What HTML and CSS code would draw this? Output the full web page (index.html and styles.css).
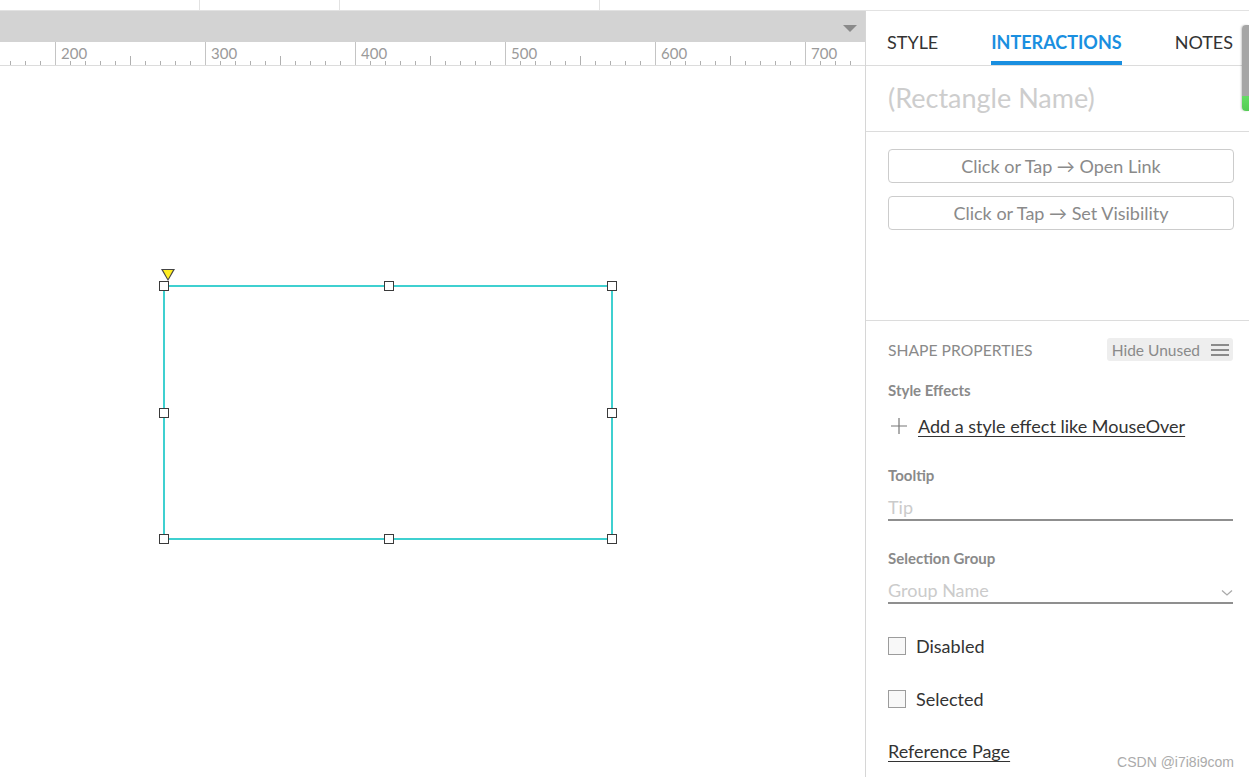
FILE: index.html
```html
<!DOCTYPE html>
<html lang="en">
<head>
    <meta charset="UTF-8">
    <title>Axure - Interactions</title>
    <link rel="stylesheet" href="styles.css">
</head>
<body>
<div class="top_strip">
    <span class="strip_cell" style="width:200px"></span>
    <span class="strip_cell" style="width:140px"></span>
    <span class="strip_cell" style="width:260px"></span>
</div>
<div class="main">
    <div class="work">
        <div class="work_bar">
            <span class="bar_arrow"></span>
        </div>
        <div class="ruler">
            <div class="ruler_start"></div>
            <div class="ruler_cell">200</div>
            <div class="ruler_cell">300</div>
            <div class="ruler_cell">400</div>
            <div class="ruler_cell">500</div>
            <div class="ruler_cell">600</div>
            <div class="ruler_cell ruler_last">700</div>
        </div>
        <div class="canvas">
            <div class="shape">
                <span class="shape_marker"></span>
                <span class="handle h_tl"></span>
                <span class="handle h_tc"></span>
                <span class="handle h_tr"></span>
                <span class="handle h_ml"></span>
                <span class="handle h_mr"></span>
                <span class="handle h_bl"></span>
                <span class="handle h_bc"></span>
                <span class="handle h_br"></span>
            </div>
        </div>
    </div>
    <div class="panel">
        <div class="tabs">
            <a href="###" class="tab">STYLE</a>
            <a href="###" class="tab active">INTERACTIONS</a>
            <a href="###" class="tab">NOTES</a>
        </div>
        <div class="name_box">(Rectangle Name)</div>
        <div class="actions">
            <a href="###" class="action_btn">Click or Tap → Open Link</a>
            <a href="###" class="action_btn">Click or Tap → Set Visibility</a>
        </div>
        <div class="props">
            <div class="props_head">
                <span class="props_title">SHAPE PROPERTIES</span>
                <span class="hide_btn">Hide Unused
                    <svg width="18" height="14" viewBox="0 0 18 14">
                        <rect x="0" y="1" width="18" height="2" fill="#8c8c8c"/>
                        <rect x="0" y="6" width="18" height="2" fill="#8c8c8c"/>
                        <rect x="0" y="11" width="18" height="2" fill="#8c8c8c"/>
                    </svg>
                </span>
            </div>
            <div class="label label_first">Style Effects</div>
            <div class="effect_row">
                <svg width="18" height="18" viewBox="0 0 18 18">
                    <path d="M9 1 V17 M1 9 H17" stroke="#777" stroke-width="1.2" fill="none"/>
                </svg>
                <a href="###" class="link">Add a style effect like MouseOver</a>
            </div>
            <div class="label">Tooltip</div>
            <div class="field">Tip</div>
            <div class="label">Selection Group</div>
            <div class="field field_select">Group Name
                <svg width="12" height="8" viewBox="0 0 12 8">
                    <path d="M1 1.5 L6 6 L11 1.5" stroke="#aaa" stroke-width="1.3" fill="none"/>
                </svg>
            </div>
            <label class="check_row check_first"><span class="check_box"></span>Disabled</label>
            <label class="check_row"><span class="check_box"></span>Selected</label>
            <a href="###" class="link ref_link">Reference Page</a>
        </div>
        <span class="scroll_thumb"></span>
        <span class="watermark">CSDN @i7i8i9com</span>
    </div>
</div>
</body>
</html>
```

FILE: styles.css
```css
*{
    padding:0;
    margin:0;
    box-sizing: border-box;
}
a {
    text-decoration: none;
    color: inherit;
}
body {
    width: 1249px;
    height: 777px;
    overflow: hidden;
    background: #fff;
    font-family: Lato, "Open Sans", sans-serif;
    color: #333;
}
.top_strip {
    display: flex;
    height: 11px;
    border-bottom: 1px solid #e2e2e2;
}
.strip_cell {
    height: 10px;
    border-right: 1px solid #e2e2e2;
}
.main {
    display: flex;
    height: 766px;
}
.work {
    width: 865px;
    display: flex;
    flex-direction: column;
    overflow: hidden;
}
.work_bar {
    height: 31px;
    background: #d3d3d3;
    display: flex;
    justify-content: flex-end;
    align-items: center;
    padding: 4px 8px 0 0;
}
.bar_arrow {
    width: 0;
    height: 0;
    border-left: 7px solid transparent;
    border-right: 7px solid transparent;
    border-top: 7px solid #8a8a8a;
}
.ruler {
    height: 24px;
    display: flex;
    overflow: hidden;
    border-bottom: 1px solid #dcdcdc;
    background-image: linear-gradient(to right, #b0b0b0 1px, transparent 1px), linear-gradient(to right, #b0b0b0 1px, transparent 1px);
    background-size: 15px 4px, 150px 9px;
    background-position: 10px 19px, 130px 14px;
    background-repeat: repeat-x;
}
.ruler_start {
    flex: 0 0 55px;
}
.ruler_cell {
    flex: 0 0 150px;
    border-left: 1px solid #c4c4c4;
    padding: 3px 0 0 5px;
    font-size: 15px;
    line-height: 17px;
    color: #9a9a9a;
}
.ruler_last {
    flex-basis: 60px;
}
.canvas {
    flex: 1;
    position: relative;
}
.shape {
    position: absolute;
    left: 163px;
    top: 219px;
    width: 450px;
    height: 255px;
    border: 2px solid #3fd0d0;
}
.shape_marker {
    position: absolute;
    left: -4px;
    top: -18px;
    width: 0;
    height: 0;
    border-left: 7px solid transparent;
    border-right: 7px solid transparent;
    border-top: 12px solid #444;
}
.shape_marker:after {
    content: "";
    position: absolute;
    left: -5px;
    top: -11px;
    border-left: 5px solid transparent;
    border-right: 5px solid transparent;
    border-top: 9px solid #ffee22;
}
.handle {
    position: absolute;
    width: 10px;
    height: 10px;
    background: #fff;
    border: 1.5px solid #3a3a3a;
}
.h_tl { left: -6px; top: -6px; }
.h_tc { left: 219px; top: -6px; }
.h_tr { right: -6px; top: -6px; }
.h_ml { left: -6px; top: 121px; }
.h_mr { right: -6px; top: 121px; }
.h_bl { left: -6px; bottom: -6px; }
.h_bc { left: 219px; bottom: -6px; }
.h_br { right: -6px; bottom: -6px; }

.panel {
    position: relative;
    width: 384px;
    border-left: 1px solid #d6d6d6;
    display: flex;
    flex-direction: column;
}
.tabs {
    height: 55px;
    display: flex;
    align-items: flex-end;
    gap: 53px;
    padding-left: 21px;
    border-bottom: 1px solid #dcdcdc;
    white-space: nowrap;
}
.tab {
    font-size: 18px;
    line-height: 22px;
    padding-bottom: 8px;
    border-bottom: 4px solid transparent;
    color: #333;
}
.tab.active {
    color: #1a8fe0;
    font-weight: bold;
    border-bottom-color: #1a8fe0;
}
.name_box {
    height: 66px;
    padding: 16px 0 0 22px;
    font-size: 27px;
    line-height: 32px;
    color: #cdcdcd;
    border-bottom: 1px solid #dcdcdc;
}
.actions {
    height: 189px;
    padding: 17px 15px 0 22px;
    border-bottom: 1px solid #dcdcdc;
}
.action_btn {
    display: block;
    height: 34px;
    line-height: 32px;
    margin-bottom: 13px;
    border: 1px solid #cccccc;
    border-radius: 4px;
    text-align: center;
    font-size: 18px;
    color: #8a8a8a;
}
.props {
    padding: 17px 16px 0 22px;
    display: flex;
    flex-direction: column;
    align-items: flex-start;
}
.props_head {
    align-self: stretch;
    display: flex;
    justify-content: space-between;
    align-items: center;
    height: 23px;
}
.props_title {
    font-size: 15.7px;
    color: #8a8a8a;
}
.hide_btn {
    display: flex;
    align-items: center;
    gap: 11px;
    height: 23px;
    padding: 0 4px 0 5px;
    background: #eeeeee;
    border-radius: 3px;
    font-size: 15.5px;
    color: #8a8a8a;
}
.label {
    margin-top: 27px;
    font-size: 15px;
    line-height: 20px;
    font-weight: bold;
    color: #8a8a8a;
}
.label_first {
    margin-top: 19px;
}
.effect_row {
    display: flex;
    align-items: center;
    gap: 10px;
    margin-top: 14px;
    height: 24px;
    padding-left: 2px;
}
.link {
    font-size: 18px;
    line-height: 24px;
    color: #333;
    text-decoration: underline;
    text-underline-offset: 3px;
    text-decoration-thickness: 1px;
}
.field {
    align-self: stretch;
    display: flex;
    justify-content: space-between;
    align-items: center;
    margin-top: 10px;
    height: 26px;
    font-size: 18px;
    line-height: 24px;
    color: #cbcbcb;
    border-bottom: 2px solid #8f8f8f;
}
.field_select svg {
    margin: 6px 0 0 0;
}
.check_row {
    display: flex;
    align-items: center;
    gap: 10px;
    height: 24px;
    margin-top: 29px;
    font-size: 18px;
    color: #333;
}
.check_first {
    margin-top: 30px;
}
.check_box {
    width: 18px;
    height: 18px;
    border: 1.5px solid #9c9c9c;
    background: #f8f8f8;
}
.ref_link {
    margin-top: 28px;
}
.scroll_thumb {
    position: absolute;
    right: 0;
    top: 14px;
    width: 7px;
    height: 86px;
    border-radius: 4px 0 0 4px;
    background: linear-gradient(to bottom, #a6a6a6 0, #a6a6a6 82%, #66dd66 82%, #55cc55 100%);
    box-shadow: -1px 0 2px rgba(0,0,0,0.2);
}
.watermark {
    position: absolute;
    right: 15px;
    bottom: 7px;
    font-family: "Liberation Sans", Arial, sans-serif;
    font-size: 14px;
    color: #ababab;
}
```
